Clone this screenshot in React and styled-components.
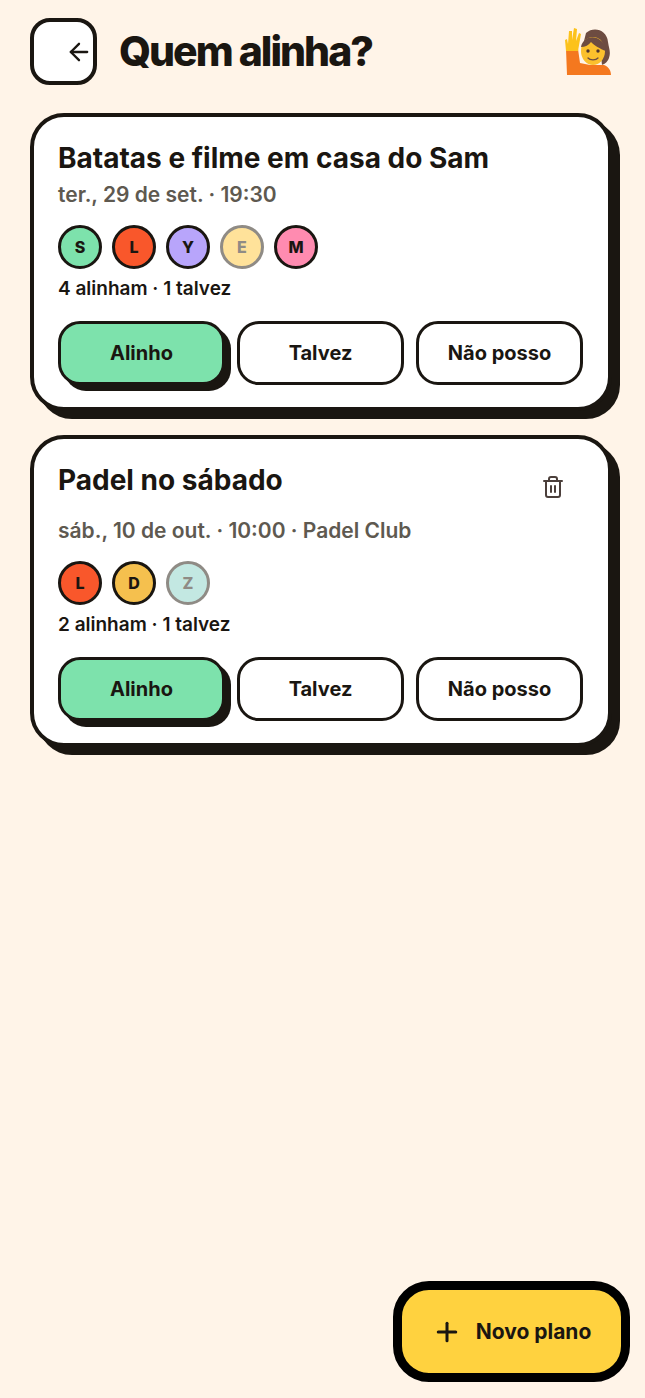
import React from 'react'
import styled, { createGlobalStyle } from 'styled-components'
import { ArrowLeft, Plus, Trash2 } from 'lucide-react'

const ink = '#1a1611'

const GlobalStyle = createGlobalStyle`
  html, body {
    margin: 0;
    padding: 0;
    background: #fff4e8;
  }
  * { box-sizing: border-box; }
`

const plans = [
  {
    title: 'Batatas e filme em casa do Sam',
    when: 'ter., 29 de set. · 19:30',
    count: '4 alinham · 1 talvez',
    people: [
      { name: 'S', color: '#7de2ac' },
      { name: 'L', color: '#f9572b' },
      { name: 'Y', color: '#b8a5fb' },
      { name: 'E', color: '#ffe29a', maybe: true },
      { name: 'M', color: '#ff8bb0' },
    ],
  },
  {
    title: 'Padel no sábado',
    when: 'sáb., 10 de out. · 10:00 · Padel Club',
    count: '2 alinham · 1 talvez',
    canDelete: true,
    people: [
      { name: 'L', color: '#f9572b' },
      { name: 'D', color: '#f5c04e' },
      { name: 'Z', color: '#c3e8e2', maybe: true },
    ],
  },
]

function RaisedHand() {
  return (
    <svg width="48" height="50" viewBox="0 0 48 50">
      <path d="M3 48 L2 22 L14 22 L16 36 L26 38 L40 38 C45 40 47 44 47 48 Z" fill="#f4781f" />
      <path d="M2 24 L1 13 L3 12 L4 17 L5 4 L8 4 L8 13 L10 1 L13 2 L12 14 L15 6 L17 7 L14 24 Z" fill="#fcc21b" />
      <path d="M22 6 C30 -1 43 3 44 15 C45 22 47 25 45 31 C43 36 40 37 38 38 L36 20 L20 14 Z" fill="#6d4c41" />
      <ellipse cx="29" cy="24" rx="12" ry="14" fill="#fbc02d" />
      <path d="M17 20 C19 10 30 8 36 13 C41 16 42 20 42 24 C36 22 30 18 27 15 C25 18 21 20 17 20 Z" fill="#6d4c41" />
      <circle cx="24" cy="24" r="1.7" fill="#4e342e" />
      <circle cx="34" cy="24" r="1.7" fill="#4e342e" />
      <path d="M24 31 C26 33.5 32 33.5 34 31" fill="none" stroke="#6d4c41" strokeWidth="1.3" strokeLinecap="round" />
    </svg>
  )
}

function Plan({ plan }) {
  return (
    <Card>
      <TitleRow>
        <PlanTitle>{plan.title}</PlanTitle>
        {plan.canDelete && (
          <DeleteButton aria-label="Apagar">
            <Trash2 size={24} strokeWidth={2} />
          </DeleteButton>
        )}
      </TitleRow>
      <When>{plan.when}</When>
      <People>
        {plan.people.map((p) => (
          <Avatar key={p.name} $color={p.color} $maybe={p.maybe}>
            {p.name}
          </Avatar>
        ))}
      </People>
      <Count>{plan.count}</Count>
      <Actions>
        <Choice $active>Alinho</Choice>
        <Choice>Talvez</Choice>
        <Choice>Não posso</Choice>
      </Actions>
    </Card>
  )
}

export default function App() {
  return (
    <Page>
      <GlobalStyle />
      <Header>
        <BackButton aria-label="Voltar">
          <ArrowLeft size={28} strokeWidth={2} />
        </BackButton>
        <Heading>Quem alinha?</Heading>
        <RaisedHand />
      </Header>
      <Cards>
        {plans.map((plan) => (
          <Plan key={plan.title} plan={plan} />
        ))}
      </Cards>
      <NewPlan>
        <Plus size={30} strokeWidth={2.4} />
        Novo plano
      </NewPlan>
    </Page>
  )
}

const Page = styled.div`
  position: relative;
  width: 645px;
  height: 1398px;
  padding: 18px 33px 0 30px;
  overflow: hidden;
  background: #fff4e8;
  color: ${ink};
  font-family: Inter, "Liberation Sans", sans-serif;
`

const Header = styled.header`
  display: flex;
  align-items: center;
  gap: 22px;
  height: 67px;
  padding-right: 0;

  svg:last-child {
    margin-left: auto;
  }
`

const BackButton = styled.button`
  flex: none;
  display: flex;
  align-items: center;
  justify-content: center;
  width: 67px;
  height: 67px;
  padding: 0;
  border: 4px solid ${ink};
  border-radius: 20px;
  background: #fff;
  color: ${ink};
`

const Heading = styled.h1`
  margin: 0;
  font-size: 41px;
  font-weight: 800;
  letter-spacing: -2px;
  line-height: 1;
`

const Cards = styled.main`
  display: flex;
  flex-direction: column;
  gap: 24px;
  margin-top: 28px;
`

const Card = styled.section`
  display: flex;
  flex-direction: column;
  padding: 24px 25px 22px 24px;
  border: 4px solid ${ink};
  border-radius: 34px;
  background: #fff;
  box-shadow: 8px 8px 0 ${ink};
`

const TitleRow = styled.div`
  display: flex;
  align-items: flex-start;
  justify-content: space-between;
`

const PlanTitle = styled.h2`
  margin: 0;
  font-size: 28px;
  font-weight: 700;
  line-height: 34px;
`

const DeleteButton = styled.button`
  display: flex;
  align-items: center;
  justify-content: center;
  width: 48px;
  height: 48px;
  margin: 0 6px 0 0;
  padding: 0;
  border: 0;
  background: none;
  color: #4b3f3b;
`

const When = styled.p`
  margin: 6px 0 0;
  font-size: 21px;
  font-weight: 600;
  line-height: 28px;
  color: #5e5950;
`

const People = styled.div`
  display: flex;
  gap: 10px;
  margin-top: 16px;
`

const Avatar = styled.span`
  display: flex;
  align-items: center;
  justify-content: center;
  width: 44px;
  height: 44px;
  border: 3px solid ${(p) => (p.$maybe ? '#8f8b85' : ink)};
  border-radius: 50%;
  background: ${(p) => p.$color};
  color: ${(p) => (p.$maybe ? '#8f8b85' : ink)};
  font-size: 16px;
  font-weight: 800;
`

const Count = styled.p`
  margin: 8px 0 0;
  font-size: 19px;
  font-weight: 600;
  line-height: 24px;
`

const Actions = styled.div`
  display: grid;
  grid-template-columns: repeat(3, 1fr);
  gap: 12px;
  margin-top: 20px;
`

const Choice = styled.button`
  height: 64px;
  padding: 0;
  border: 3px solid ${ink};
  border-radius: 22px;
  background: ${(p) => (p.$active ? '#7de2ac' : '#fff')};
  box-shadow: ${(p) => (p.$active ? `6px 6px 0 ${ink}` : 'none')};
  color: ${ink};
  font-family: inherit;
  font-size: 20px;
  font-weight: 700;
`

const NewPlan = styled.button`
  position: absolute;
  right: 15px;
  bottom: 16px;
  display: flex;
  align-items: center;
  justify-content: center;
  gap: 14px;
  width: 237px;
  height: 101px;
  padding: 0;
  border: 9px solid #000;
  border-radius: 36px;
  background: #ffd23f;
  color: ${ink};
  font-family: inherit;
  font-size: 21px;
  font-weight: 700;
`
